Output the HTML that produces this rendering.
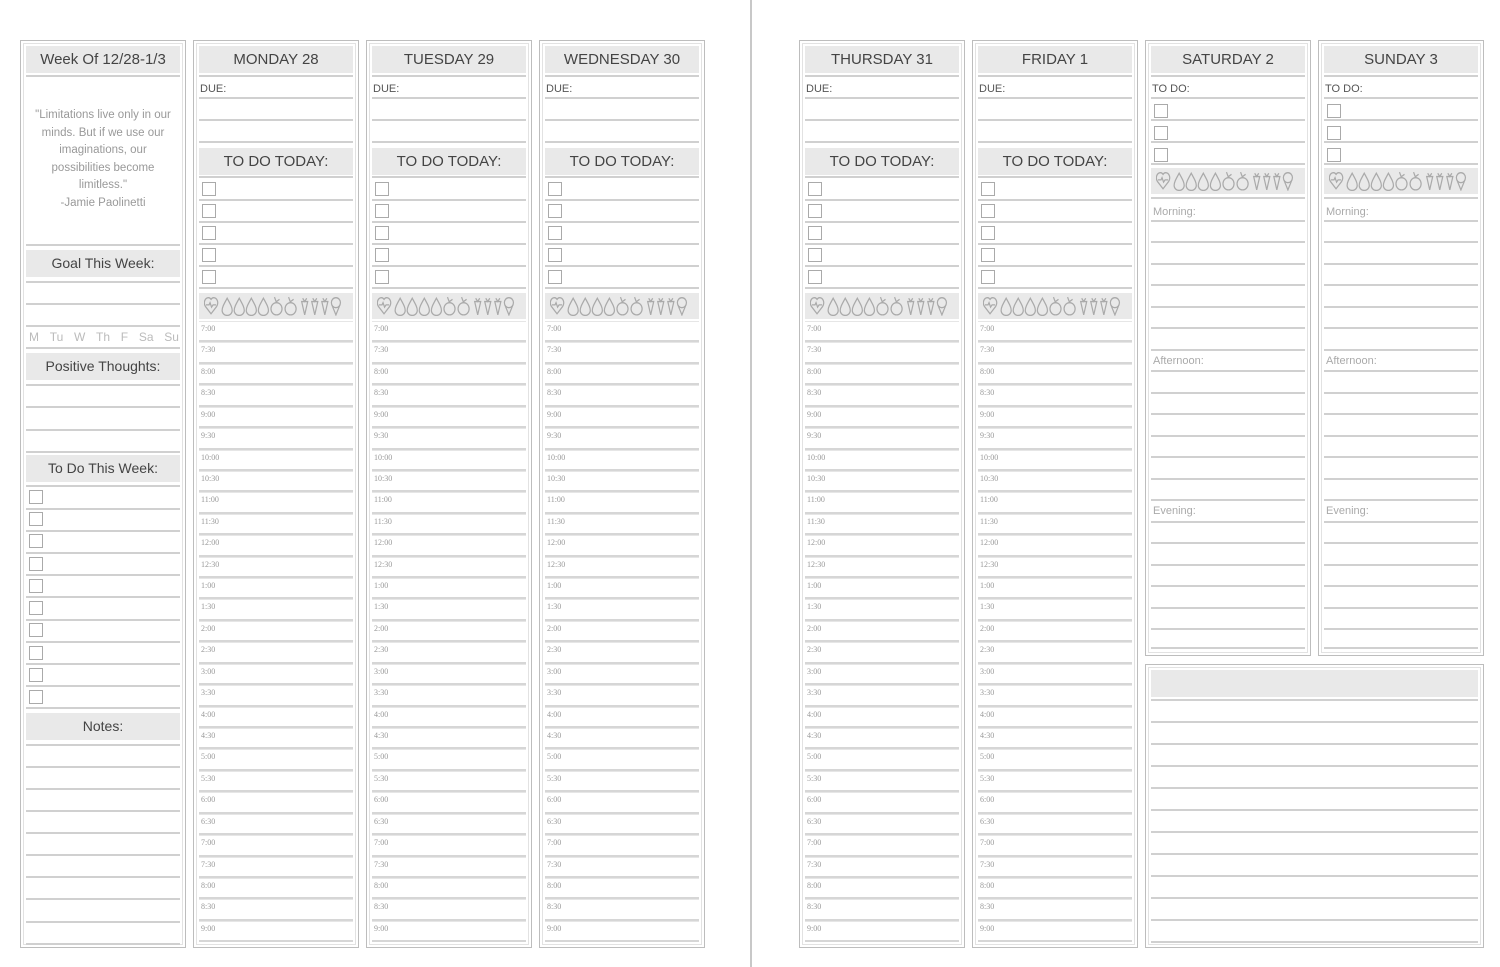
<!DOCTYPE html>
<html><head><meta charset="utf-8"><style>
*{margin:0;padding:0;box-sizing:border-box}
body{width:1500px;height:967px;background:#fff;position:relative;overflow:hidden;font-family:"Liberation Sans",sans-serif;color:#444}
.box{position:absolute;border:1px solid #bdbdbd;box-shadow:inset 0 0 0 2px #fff,inset 0 0 0 3px #e2e2e2}
.h{position:absolute;left:5px;right:5px;height:27px;background:#e9e9e9;text-align:center;font-size:15px;line-height:27px;color:#444}
.l{position:absolute;left:5px;right:5px;border-top:2px solid #d0d0d0}
.t{position:absolute;left:6px;font-size:11px;color:#555}
.g{position:absolute;left:7px;font-size:11px;color:#aaa}
.cb{position:absolute;left:8px;width:14px;height:14px;border:1.5px solid #aaa}
.ic{position:absolute;left:5px;right:5px;height:26px;background:#e9e9e9}
.ic svg{position:absolute;left:5px;top:3px}
.tm{position:absolute;left:5px;right:5px;top:280px}
.tm div{height:21.43px;border-bottom:2px solid #d6d6d6;font-family:"Liberation Serif",serif;font-size:8px;color:#999;padding:3px 0 0 2px;position:relative}
.tm div:before{content:"";position:absolute;left:0;right:0;top:0;border-top:1px solid #e6e6e6}
.q{position:absolute;left:5px;right:5px;top:66px;text-align:center;font-size:11.5px;line-height:17.5px;color:#999}
</style></head><body>
<svg width="0" height="0" style="position:absolute"><defs>
<symbol id="icons" viewBox="0 0 145 18"><g fill="none" stroke="#aaa" stroke-width="1.2">
<path d="M7 16 L1.5 9.5 C-1 6 1 1.5 4.5 1.5 C6 1.5 7 3 7 3 C7 3 8 1.5 9.5 1.5 C13 1.5 15 6 12.5 9.5 Z"/><path d="M2 8 H5 L6 6 L7.5 10 L9 8 H12"/>
<path d="M23 2 C20 7 18 10 18 13 A5 4.5 0 0 0 28 13 C28 10 26 7 23 2Z"/>
<path d="M35 2 C32 7 30 10 30 13 A5 4.5 0 0 0 40 13 C40 10 38 7 35 2Z"/>
<path d="M47 2 C44 7 42 10 42 13 A5 4.5 0 0 0 52 13 C52 10 50 7 47 2Z"/>
<path d="M59 2 C56 7 54 10 54 13 A5 4.5 0 0 0 64 13 C64 10 62 7 59 2Z"/>
<circle cx="72" cy="11.5" r="5.5"/><path d="M72 6 L70 1 M72 5 L75 3"/>
<circle cx="86" cy="11.5" r="5.5"/><path d="M86 6 L84 1 M86 5 L89 3"/>
<path d="M97 5 H103 L100 17 Z M98 2 L100 5 L102 2"/>
<path d="M107 5 H113 L110 17 Z M108 2 L110 5 L112 2"/>
<path d="M117 5 H123 L120 17 Z M118 2 L120 5 L122 2"/>
<circle cx="131" cy="6" r="4.5"/><path d="M127 8 L131 17 L135 8"/>
</g></symbol></defs></svg>

<div style="position:absolute;left:750px;top:0;width:2px;height:967px;background:#c8c8c8"></div>

<!-- Sidebar -->
<div class="box" style="left:20px;top:40px;width:166px;height:908px">
<div class="h" style="top:5px">Week Of 12/28-1/3</div>
<div class="l" style="top:34px"></div>
<div class="q">"Limitations live only in our<br>minds. But if we use our<br>imaginations, our<br>possibilities become<br>limitless."<br>-Jamie Paolinetti</div>
<div class="l" style="top:203px"></div>
<div class="h" style="top:209px;font-size:14px">Goal This Week:</div>
<div class="l" style="top:240px"></div>
<div class="l" style="top:262px"></div>
<div class="l" style="top:284px"></div>
<div style="position:absolute;left:8px;right:6px;top:289px;font-size:12px;color:#bbb;display:flex;justify-content:space-between"><span>M</span><span>Tu</span><span>W</span><span>Th</span><span>F</span><span>Sa</span><span>Su</span></div>
<div class="l" style="top:306px"></div>
<div class="h" style="top:312px;font-size:14px">Positive Thoughts:</div>
<div class="l" style="top:343px"></div>
<div class="l" style="top:365px"></div>
<div class="l" style="top:388px"></div>
<div class="l" style="top:410px"></div>
<div class="h" style="top:414px;font-size:14px">To Do This Week:</div>
<div class="l" style="top:444px"></div>
<div class="cb" style="top:449px"></div><div class="l" style="top:467px"></div>
<div class="cb" style="top:471px"></div><div class="l" style="top:489px"></div>
<div class="cb" style="top:493px"></div><div class="l" style="top:511px"></div>
<div class="cb" style="top:516px"></div><div class="l" style="top:533px"></div>
<div class="cb" style="top:538px"></div><div class="l" style="top:555px"></div>
<div class="cb" style="top:560px"></div><div class="l" style="top:578px"></div>
<div class="cb" style="top:582px"></div><div class="l" style="top:600px"></div>
<div class="cb" style="top:605px"></div><div class="l" style="top:622px"></div>
<div class="cb" style="top:627px"></div><div class="l" style="top:644px"></div>
<div class="cb" style="top:649px"></div><div class="l" style="top:666px"></div>
<div class="h" style="top:672px;font-size:14px">Notes:</div>
<div class="l" style="top:703px"></div>
<div class="l" style="top:725px"></div>
<div class="l" style="top:747px"></div>
<div class="l" style="top:769px"></div>
<div class="l" style="top:791px"></div>
<div class="l" style="top:813px"></div>
<div class="l" style="top:835px"></div>
<div class="l" style="top:857px"></div>
<div class="l" style="top:880px"></div>
<div class="l" style="top:902px"></div>
</div>

<!-- Day columns -->
<div class="box" style="left:193px;top:40px;width:166px;height:908px">
<div class="h" style="top:5px">MONDAY 28</div>
<div class="l" style="top:34px"></div><div class="t" style="top:42px">DUE:</div>
<div class="l" style="top:56px"></div><div class="l" style="top:78px"></div><div class="l" style="top:100px"></div>
<div class="h" style="top:107px">TO DO TODAY:</div><div class="l" style="top:135px"></div>
<div class="cb" style="top:141px"></div><div class="l" style="top:158px"></div>
<div class="cb" style="top:163px"></div><div class="l" style="top:180px"></div>
<div class="cb" style="top:185px"></div><div class="l" style="top:202px"></div>
<div class="cb" style="top:207px"></div><div class="l" style="top:224px"></div>
<div class="cb" style="top:229px"></div><div class="l" style="top:246px"></div>
<div class="ic" style="top:252px"><svg width="146" height="20" viewBox="0 0 145 18" preserveAspectRatio="none"><use href="#icons"/></svg></div>
<div class="tm"><div>7:00</div><div>7:30</div><div>8:00</div><div>8:30</div><div>9:00</div><div>9:30</div><div>10:00</div><div>10:30</div><div>11:00</div><div>11:30</div><div>12:00</div><div>12:30</div><div>1:00</div><div>1:30</div><div>2:00</div><div>2:30</div><div>3:00</div><div>3:30</div><div>4:00</div><div>4:30</div><div>5:00</div><div>5:30</div><div>6:00</div><div>6:30</div><div>7:00</div><div>7:30</div><div>8:00</div><div>8:30</div><div>9:00</div></div>
</div>

<div class="box" style="left:366px;top:40px;width:166px;height:908px">
<div class="h" style="top:5px">TUESDAY 29</div>
<div class="l" style="top:34px"></div><div class="t" style="top:42px">DUE:</div>
<div class="l" style="top:56px"></div><div class="l" style="top:78px"></div><div class="l" style="top:100px"></div>
<div class="h" style="top:107px">TO DO TODAY:</div><div class="l" style="top:135px"></div>
<div class="cb" style="top:141px"></div><div class="l" style="top:158px"></div>
<div class="cb" style="top:163px"></div><div class="l" style="top:180px"></div>
<div class="cb" style="top:185px"></div><div class="l" style="top:202px"></div>
<div class="cb" style="top:207px"></div><div class="l" style="top:224px"></div>
<div class="cb" style="top:229px"></div><div class="l" style="top:246px"></div>
<div class="ic" style="top:252px"><svg width="146" height="20" viewBox="0 0 145 18" preserveAspectRatio="none"><use href="#icons"/></svg></div>
<div class="tm"><div>7:00</div><div>7:30</div><div>8:00</div><div>8:30</div><div>9:00</div><div>9:30</div><div>10:00</div><div>10:30</div><div>11:00</div><div>11:30</div><div>12:00</div><div>12:30</div><div>1:00</div><div>1:30</div><div>2:00</div><div>2:30</div><div>3:00</div><div>3:30</div><div>4:00</div><div>4:30</div><div>5:00</div><div>5:30</div><div>6:00</div><div>6:30</div><div>7:00</div><div>7:30</div><div>8:00</div><div>8:30</div><div>9:00</div></div>
</div>

<div class="box" style="left:539px;top:40px;width:166px;height:908px">
<div class="h" style="top:5px">WEDNESDAY 30</div>
<div class="l" style="top:34px"></div><div class="t" style="top:42px">DUE:</div>
<div class="l" style="top:56px"></div><div class="l" style="top:78px"></div><div class="l" style="top:100px"></div>
<div class="h" style="top:107px">TO DO TODAY:</div><div class="l" style="top:135px"></div>
<div class="cb" style="top:141px"></div><div class="l" style="top:158px"></div>
<div class="cb" style="top:163px"></div><div class="l" style="top:180px"></div>
<div class="cb" style="top:185px"></div><div class="l" style="top:202px"></div>
<div class="cb" style="top:207px"></div><div class="l" style="top:224px"></div>
<div class="cb" style="top:229px"></div><div class="l" style="top:246px"></div>
<div class="ic" style="top:252px"><svg width="146" height="20" viewBox="0 0 145 18" preserveAspectRatio="none"><use href="#icons"/></svg></div>
<div class="tm"><div>7:00</div><div>7:30</div><div>8:00</div><div>8:30</div><div>9:00</div><div>9:30</div><div>10:00</div><div>10:30</div><div>11:00</div><div>11:30</div><div>12:00</div><div>12:30</div><div>1:00</div><div>1:30</div><div>2:00</div><div>2:30</div><div>3:00</div><div>3:30</div><div>4:00</div><div>4:30</div><div>5:00</div><div>5:30</div><div>6:00</div><div>6:30</div><div>7:00</div><div>7:30</div><div>8:00</div><div>8:30</div><div>9:00</div></div>
</div>

<div class="box" style="left:799px;top:40px;width:166px;height:908px">
<div class="h" style="top:5px">THURSDAY 31</div>
<div class="l" style="top:34px"></div><div class="t" style="top:42px">DUE:</div>
<div class="l" style="top:56px"></div><div class="l" style="top:78px"></div><div class="l" style="top:100px"></div>
<div class="h" style="top:107px">TO DO TODAY:</div><div class="l" style="top:135px"></div>
<div class="cb" style="top:141px"></div><div class="l" style="top:158px"></div>
<div class="cb" style="top:163px"></div><div class="l" style="top:180px"></div>
<div class="cb" style="top:185px"></div><div class="l" style="top:202px"></div>
<div class="cb" style="top:207px"></div><div class="l" style="top:224px"></div>
<div class="cb" style="top:229px"></div><div class="l" style="top:246px"></div>
<div class="ic" style="top:252px"><svg width="146" height="20" viewBox="0 0 145 18" preserveAspectRatio="none"><use href="#icons"/></svg></div>
<div class="tm"><div>7:00</div><div>7:30</div><div>8:00</div><div>8:30</div><div>9:00</div><div>9:30</div><div>10:00</div><div>10:30</div><div>11:00</div><div>11:30</div><div>12:00</div><div>12:30</div><div>1:00</div><div>1:30</div><div>2:00</div><div>2:30</div><div>3:00</div><div>3:30</div><div>4:00</div><div>4:30</div><div>5:00</div><div>5:30</div><div>6:00</div><div>6:30</div><div>7:00</div><div>7:30</div><div>8:00</div><div>8:30</div><div>9:00</div></div>
</div>

<div class="box" style="left:972px;top:40px;width:166px;height:908px">
<div class="h" style="top:5px">FRIDAY 1</div>
<div class="l" style="top:34px"></div><div class="t" style="top:42px">DUE:</div>
<div class="l" style="top:56px"></div><div class="l" style="top:78px"></div><div class="l" style="top:100px"></div>
<div class="h" style="top:107px">TO DO TODAY:</div><div class="l" style="top:135px"></div>
<div class="cb" style="top:141px"></div><div class="l" style="top:158px"></div>
<div class="cb" style="top:163px"></div><div class="l" style="top:180px"></div>
<div class="cb" style="top:185px"></div><div class="l" style="top:202px"></div>
<div class="cb" style="top:207px"></div><div class="l" style="top:224px"></div>
<div class="cb" style="top:229px"></div><div class="l" style="top:246px"></div>
<div class="ic" style="top:252px"><svg width="146" height="20" viewBox="0 0 145 18" preserveAspectRatio="none"><use href="#icons"/></svg></div>
<div class="tm"><div>7:00</div><div>7:30</div><div>8:00</div><div>8:30</div><div>9:00</div><div>9:30</div><div>10:00</div><div>10:30</div><div>11:00</div><div>11:30</div><div>12:00</div><div>12:30</div><div>1:00</div><div>1:30</div><div>2:00</div><div>2:30</div><div>3:00</div><div>3:30</div><div>4:00</div><div>4:30</div><div>5:00</div><div>5:30</div><div>6:00</div><div>6:30</div><div>7:00</div><div>7:30</div><div>8:00</div><div>8:30</div><div>9:00</div></div>
</div>

<!-- Weekend -->
<div class="box" style="left:1145px;top:40px;width:166px;height:616px">
<div class="h" style="top:5px">SATURDAY 2</div>
<div class="l" style="top:34px"></div><div class="t" style="top:42px">TO DO:</div>
<div class="l" style="top:56px"></div>
<div class="cb" style="top:63px"></div><div class="l" style="top:78px"></div>
<div class="cb" style="top:85px"></div><div class="l" style="top:100px"></div>
<div class="cb" style="top:107px"></div><div class="l" style="top:122px"></div>
<div class="ic" style="top:127px"><svg width="146" height="20" viewBox="0 0 145 18" preserveAspectRatio="none"><use href="#icons"/></svg></div>
<div class="l" style="top:156px"></div>
<div class="g" style="top:165px">Morning:</div>
<div class="l" style="top:179px"></div><div class="l" style="top:200px"></div><div class="l" style="top:222px"></div><div class="l" style="top:243px"></div><div class="l" style="top:265px"></div><div class="l" style="top:286px"></div><div class="l" style="top:308px"></div>
<div class="g" style="top:314px">Afternoon:</div>
<div class="l" style="top:329px"></div><div class="l" style="top:351px"></div><div class="l" style="top:372px"></div><div class="l" style="top:394px"></div><div class="l" style="top:415px"></div><div class="l" style="top:437px"></div><div class="l" style="top:458px"></div>
<div class="g" style="top:464px">Evening:</div>
<div class="l" style="top:480px"></div><div class="l" style="top:501px"></div><div class="l" style="top:523px"></div><div class="l" style="top:544px"></div><div class="l" style="top:566px"></div><div class="l" style="top:587px"></div><div class="l" style="top:606px"></div>
</div>

<div class="box" style="left:1318px;top:40px;width:166px;height:616px">
<div class="h" style="top:5px">SUNDAY 3</div>
<div class="l" style="top:34px"></div><div class="t" style="top:42px">TO DO:</div>
<div class="l" style="top:56px"></div>
<div class="cb" style="top:63px"></div><div class="l" style="top:78px"></div>
<div class="cb" style="top:85px"></div><div class="l" style="top:100px"></div>
<div class="cb" style="top:107px"></div><div class="l" style="top:122px"></div>
<div class="ic" style="top:127px"><svg width="146" height="20" viewBox="0 0 145 18" preserveAspectRatio="none"><use href="#icons"/></svg></div>
<div class="l" style="top:156px"></div>
<div class="g" style="top:165px">Morning:</div>
<div class="l" style="top:179px"></div><div class="l" style="top:200px"></div><div class="l" style="top:222px"></div><div class="l" style="top:243px"></div><div class="l" style="top:265px"></div><div class="l" style="top:286px"></div><div class="l" style="top:308px"></div>
<div class="g" style="top:314px">Afternoon:</div>
<div class="l" style="top:329px"></div><div class="l" style="top:351px"></div><div class="l" style="top:372px"></div><div class="l" style="top:394px"></div><div class="l" style="top:415px"></div><div class="l" style="top:437px"></div><div class="l" style="top:458px"></div>
<div class="g" style="top:464px">Evening:</div>
<div class="l" style="top:480px"></div><div class="l" style="top:501px"></div><div class="l" style="top:523px"></div><div class="l" style="top:544px"></div><div class="l" style="top:566px"></div><div class="l" style="top:587px"></div><div class="l" style="top:606px"></div>
</div>

<div class="box" style="left:1145px;top:664px;width:339px;height:284px">
<div class="h" style="top:5px"></div>
<div class="l" style="top:34px"></div><div class="l" style="top:56px"></div><div class="l" style="top:78px"></div><div class="l" style="top:100px"></div><div class="l" style="top:122px"></div><div class="l" style="top:144px"></div><div class="l" style="top:166px"></div><div class="l" style="top:188px"></div><div class="l" style="top:210px"></div><div class="l" style="top:232px"></div><div class="l" style="top:254px"></div><div class="l" style="top:276px"></div>
</div>
</body></html>
